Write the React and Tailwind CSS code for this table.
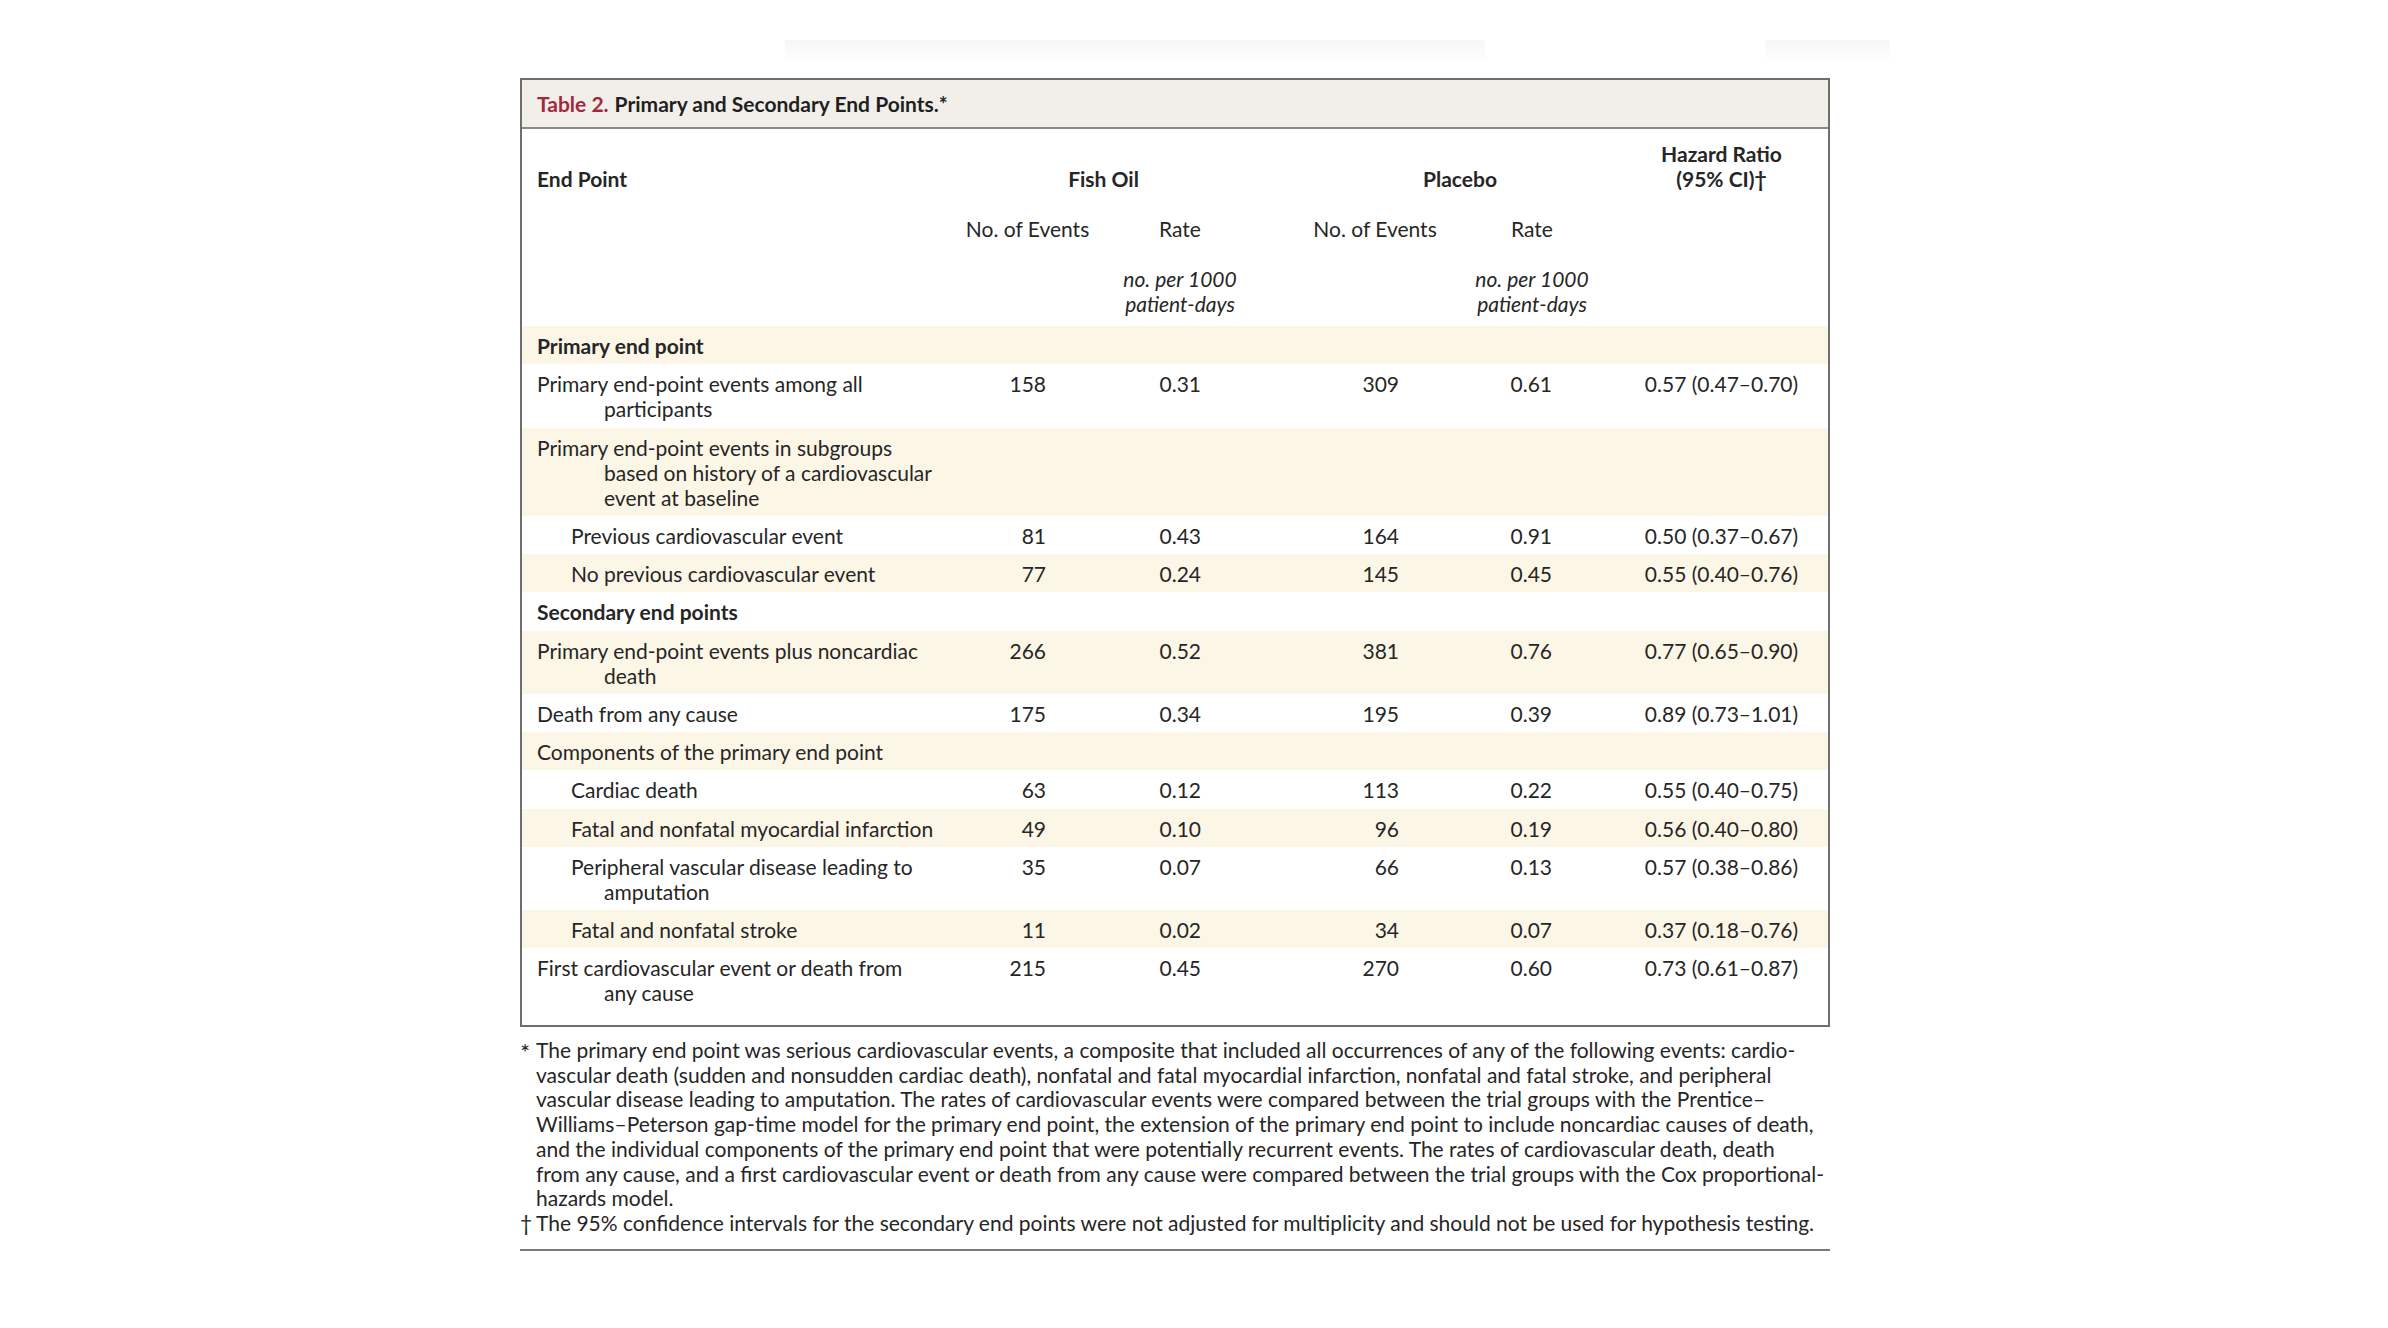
import React from "react";

const rows = [
  { label: ["Primary end point"], bold: true },
  {
    label: ["Primary end-point events among all", "participants"],
    v: ["158", "0.31", "309", "0.61", "0.57 (0.47–0.70)"],
  },
  {
    label: [
      "Primary end-point events in subgroups",
      "based on history of a cardiovascular",
      "event at baseline",
    ],
  },
  {
    label: ["Previous cardiovascular event"],
    indent: true,
    v: ["81", "0.43", "164", "0.91", "0.50 (0.37–0.67)"],
  },
  {
    label: ["No previous cardiovascular event"],
    indent: true,
    v: ["77", "0.24", "145", "0.45", "0.55 (0.40–0.76)"],
  },
  { label: ["Secondary end points"], bold: true },
  {
    label: ["Primary end-point events plus noncardiac", "death"],
    v: ["266", "0.52", "381", "0.76", "0.77 (0.65–0.90)"],
  },
  {
    label: ["Death from any cause"],
    v: ["175", "0.34", "195", "0.39", "0.89 (0.73–1.01)"],
  },
  { label: ["Components of the primary end point"] },
  {
    label: ["Cardiac death"],
    indent: true,
    v: ["63", "0.12", "113", "0.22", "0.55 (0.40–0.75)"],
  },
  {
    label: ["Fatal and nonfatal myocardial infarction"],
    indent: true,
    v: ["49", "0.10", "96", "0.19", "0.56 (0.40–0.80)"],
  },
  {
    label: ["Peripheral vascular disease leading to", "amputation"],
    indent: true,
    v: ["35", "0.07", "66", "0.13", "0.57 (0.38–0.86)"],
  },
  {
    label: ["Fatal and nonfatal stroke"],
    indent: true,
    v: ["11", "0.02", "34", "0.07", "0.37 (0.18–0.76)"],
  },
  {
    label: ["First cardiovascular event or death from", "any cause"],
    v: ["215", "0.45", "270", "0.60", "0.73 (0.61–0.87)"],
  },
];

const notes = [
  "The primary end point was serious cardiovascular events, a composite that included all occurrences of any of the following events: cardio-",
  "vascular death (sudden and nonsudden cardiac death), nonfatal and fatal myocardial infarction, nonfatal and fatal stroke, and peripheral",
  "vascular disease leading to amputation. The rates of cardiovascular events were compared between the trial groups with the Prentice–",
  "Williams–Peterson gap-time model for the primary end point, the extension of the primary end point to include noncardiac causes of death,",
  "and the individual components of the primary end point that were potentially recurrent events. The rates of cardiovascular death, death",
  "from any cause, and a first cardiovascular event or death from any cause were compared between the trial groups with the Cox proportional-",
  "hazards model.",
];

const grid =
  "grid grid-cols-[429px_153px_152px_41px_156px_158px_1fr]";

const Row = ({ row, shaded }) => (
  <div className={`${grid} pt-[7px] pb-[6.25px] ${shaded ? "bg-[#fcf6e6]" : "bg-white"}`}>
    <div className={row.bold ? "font-bold" : ""}>
      {row.label.map((line, i) => (
        <div
          key={i}
          className={
            i > 0 ? "pl-[82px]" : row.indent ? "pl-[49px]" : "pl-[15px]"
          }
        >
          {line}
        </div>
      ))}
    </div>
    {row.v && (
      <>
        <div className="text-right pr-[58px]">{row.v[0]}</div>
        <div className="text-right pr-[55px]">{row.v[1]}</div>
        <div />
        <div className="text-right pr-[54px]">{row.v[2]}</div>
        <div className="text-right pr-[59px]">{row.v[3]}</div>
        <div className="text-center pl-[4px]">{row.v[4]}</div>
      </>
    )}
  </div>
);

export default function App() {
  return (
    <div className="min-h-screen bg-white font-['Lato','Liberation_Sans',sans-serif] text-[21px] leading-[25px] text-[#262626]">
      {/* faint smudge above the table */}
      <div className="flex pt-[40px] h-[62px]">
        <div className="ml-[785px] w-[700px] h-[22px] bg-gradient-to-b from-[#f6f6f6] to-white" />
        <div className="ml-[280px] w-[125px] h-[22px] bg-gradient-to-b from-[#f7f7f7] to-white" />
      </div>

      <div className="ml-[520px] mt-[16px] w-[1310px]">
        <div className="border-2 border-[#6e6e6e]">
          <div className="bg-[#f2efea] border-b-2 border-[#8a8a8a] h-[49px] flex items-center pl-[15px] font-bold">
            <span className="text-[#a3283b]">Table 2.</span>
            <span className="ml-[6px] text-[#1f1f1f]">Primary and Secondary End Points.*</span>
          </div>

          <div className="pt-[12px] pb-[10px]">
            <div className={`${grid} items-end font-bold`}>
              <div className="pl-[15px]">End Point</div>
              <div className="col-span-2 text-center">Fish Oil</div>
              <div />
              <div className="col-span-2 text-center pl-[12px]">Placebo</div>
              <div className="text-center pl-[4px]">
                <div>Hazard Ratio</div>
                <div>(95% CI)†</div>
              </div>
            </div>
            <div className={`${grid} mt-[25px]`}>
              <div />
              <div className="text-center">No. of Events</div>
              <div className="text-center">Rate</div>
              <div />
              <div className="text-center">No. of Events</div>
              <div className="text-center">Rate</div>
              <div />
            </div>
            <div className={`${grid} mt-[25px] italic`}>
              <div />
              <div />
              <div className="text-center">
                <div>no. per 1000</div>
                <div>patient-days</div>
              </div>
              <div />
              <div />
              <div className="text-center">
                <div>no. per 1000</div>
                <div>patient-days</div>
              </div>
              <div />
            </div>
          </div>

          <div className="pb-[13.5px]">
            {rows.map((row, i) => (
              <Row key={i} row={row} shaded={i % 2 === 0} />
            ))}
          </div>
        </div>

        <div className="mt-[11px] pb-[13px] border-b-2 border-[#7a7a7a] leading-[24.7px] whitespace-nowrap">
          <div className="flex">
            <span className="w-[16px] shrink-0 text-[24px] leading-[28px] h-[24.7px]">*</span>
            <div>
              {notes.map((n, i) => (
                <div key={i}>{n}</div>
              ))}
            </div>
          </div>
          <div className="flex">
            <span className="w-[16px] shrink-0">†</span>
            <div>
              The 95% confidence intervals for the secondary end points were not adjusted for multiplicity and should not be used for hypothesis testing.
            </div>
          </div>
        </div>
      </div>
    </div>
  );
}
